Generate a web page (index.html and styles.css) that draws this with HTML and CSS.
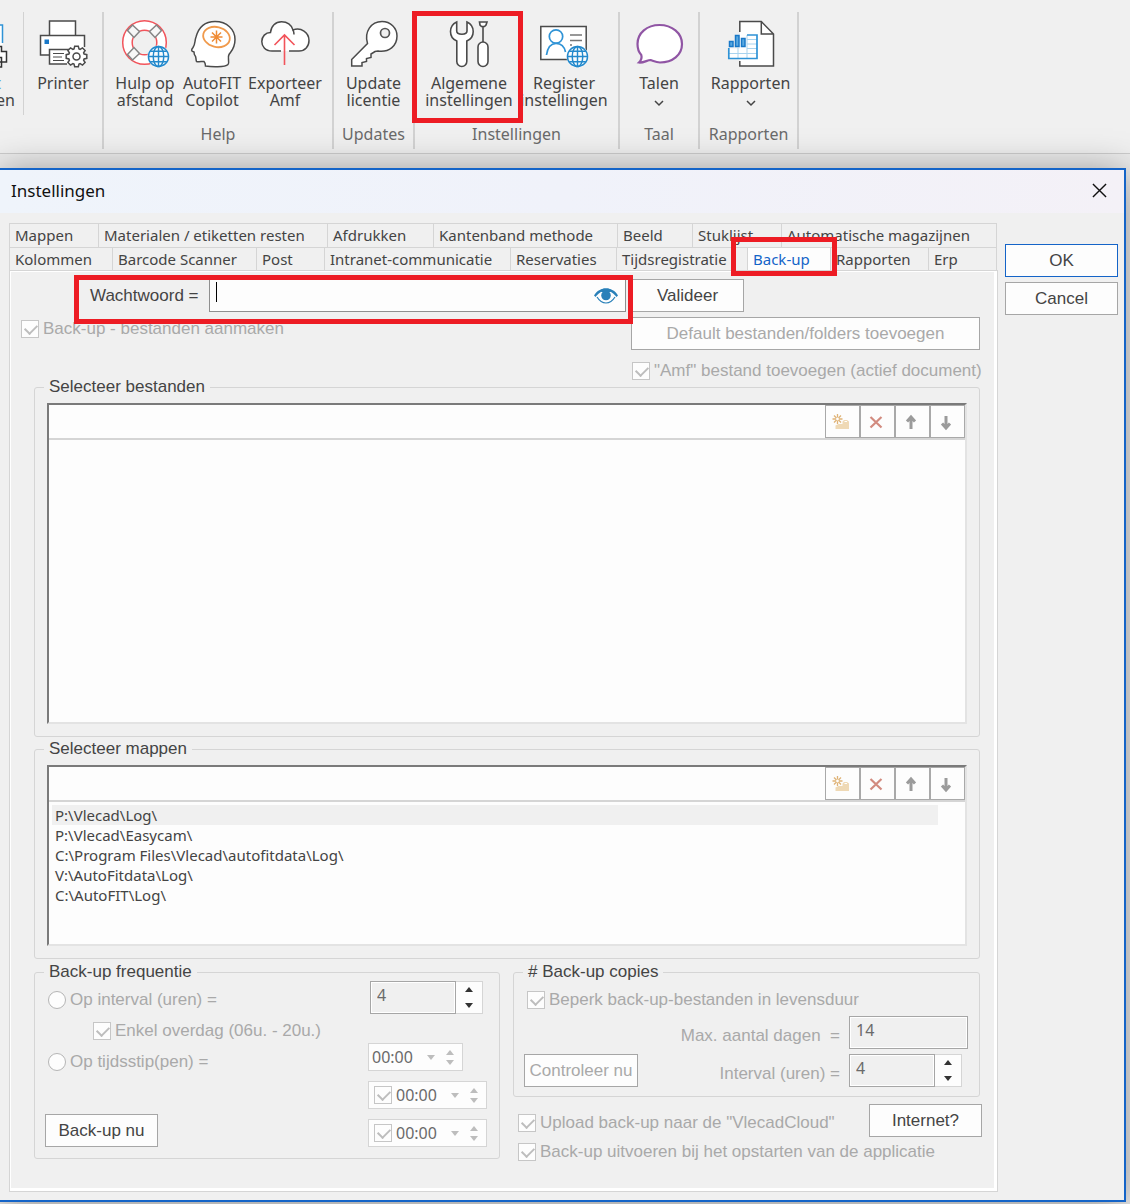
FILE: index.html
```html
<!DOCTYPE html>
<html lang="nl">
<head>
  <meta charset="UTF-8" />
  <meta name="viewport" content="width=device-width, initial-scale=1.0" />
  <title>Instellingen</title>
  <link rel="stylesheet" href="styles.css">
</head>
<body>

  <!-- shared icon parts -->
  <svg class="defs" aria-hidden="true">
    <symbol id="globe" viewBox="0 0 24 24">
      <circle cx="12" cy="12" r="11.5" fill="#f8fbfd" />
      <g fill="none" stroke="#2389cc" stroke-width="1.5">
        <circle cx="12" cy="12" r="10.5" />
        <ellipse cx="12" cy="12" rx="5.5" ry="10.5" />
        <path d="M12 1.5v21M1.5 12h21M3.5 6.5h17M3.5 17.5h17" />
      </g>
    </symbol>
    <symbol id="new" viewBox="0 0 18 18">
      <path d="M5.500 1v10M.5 6h10M2 2.500l7 7M9 2.500l-7 7" stroke="#dfb377" stroke-width="1.3" />
      <circle cx="5.500" cy="6" r="1.400" fill="#fff" />
      <path d="M3.500 12.500l3-1.500h4V8.500l1.500-1.500h3l2 1.500V16h-13.500z" fill="#efd9b5" />
      <path d="M12.500 8.500h2.500" stroke="#fff" />
    </symbol>
    <symbol id="del" viewBox="0 0 18 18"><path d="M3.500 4l11 10.500M14.500 4L3.500 14.500" stroke="#d28b7f" stroke-width="2.200" /></symbol>
    <symbol id="up" viewBox="0 0 18 18"><path d="M9 16V4M5 8.500l4-4.500 4 4.500" fill="none" stroke="#9b9b9b" stroke-width="3" /></symbol>
    <symbol id="down" viewBox="0 0 18 18"><path d="M9 3v12M5 10.500l4 4.500 4-4.500" fill="none" stroke="#9b9b9b" stroke-width="3" /></symbol>
  </svg>

  <header class="ribbon">
    <section class="group group-print">
      <div class="tools">
        <button class="tool cut">
          <svg viewBox="0 0 48 48">
            <path d="M8 5h18.500v22H8z" fill="#fff" />
            <path d="M8 5h18.500v18" fill="none" stroke="#2f93d6" stroke-width="1.500" />
            <path d="M8 26.500h17.500v5h5V42H8zM8 37.500h17.500v9.500H8z" fill="#fff" stroke="#333" stroke-width="1.500" />
          </svg>
          <span><i>t</i><br>en</span>
        </button>
        <button class="tool printer">
          <svg viewBox="0 0 48 48">
            <g fill="#fff" stroke="#4a4a4a" stroke-width="1.500">
              <path d="M10.500 15.500V1h26v14.500" />
              <path d="M28 35H1.500V15.500h44V27" />
              <path d="M28 44H10.500V29.500H30" />
              <path d="M14 33.500h11M14 37h9M14 40.500h11" stroke-width="1" />
              <path transform="translate(37.500 36.500)" d="M7.600-2.500l2.700.7v3.600l-2.700.7-.5 1.100L8.600 6 6 8.600 3.600 7.100l-1.100.5-.7 2.700h-3.600l-.7-2.700-1.100-.5L-6 8.600-8.600 6l1.500-2.400-.5-1.100-2.700-.7v-3.600l2.700-.7.5-1.100L-8.600-6-6-8.600l2.400 1.500 1.100-.5.7-2.700h3.600l.7 2.700 1.100.5L6-8.600 8.600-6 7.100-3.600z" />
              <circle cx="37.500" cy="36.500" r="3.500" />
            </g>
            <path d="M5.500 19.500h4.500V24H5.500z" fill="#1878c8" />
          </svg>
          <span>Printer</span>
        </button>
      </div>
    </section>

    <section class="group group-help">
      <div class="tools">
        <button class="tool w67">
          <svg viewBox="0 0 48 48">
            <circle cx="23.500" cy="22.500" r="17" fill="none" stroke="#fff" stroke-width="9" />
            <g fill="none" stroke="#f2545b" stroke-width="1.500"><circle cx="23.500" cy="22.500" r="21.800" /><circle cx="23.500" cy="22.500" r="12.300" /></g>
            <g fill="#f7f7f7" stroke="#858585" stroke-width="1.500">
              <path d="M6.500 10.500l5-5.500 7 6.500-5.500 6z" />
              <path d="M28.500 11.500l7-6.500 5 5.500-6.500 7z" />
              <path d="M6.500 34.500l6.500-7 5.500 6-7 6.500z" />
            </g>
            <use href="#globe" x="26" y="25" width="23" height="23" />
          </svg>
          <span>Hulp op<br>afstand</span>
        </button>
        <button class="tool w67">
          <svg viewBox="0 0 48 48">
            <path d="M8.500 41.500C7.500 39 8.500 37 7 35.500 5.500 34 6.500 33 6 32 2.500 31 3.500 29.500 5 27.500 7.500 24 6.500 21 8 17 11 6 18 1.500 27 1.500c12 0 20 8 20 18 0 9-4 12-6 15-2 3 1 8-1 10-3 3-17 2.500-22.500 1.500 0-2-.5-3.500-1.500-4.500-3 0-5 .5-7.500 0z" fill="#fff" stroke="#4a4a4a" stroke-width="1.500" />
            <ellipse cx="28.500" cy="17" rx="13.500" ry="10" transform="rotate(14 28.500 17)" fill="none" stroke="#f09a4c" stroke-width="1.800" />
            <path d="M28.500 10.500v13M22.500 17h12M24 12.500l9 9M33 12.500l-9 9" stroke="#ef8b35" stroke-width="1.500" />
          </svg>
          <span>AutoFIT<br>Copilot</span>
        </button>
        <button class="tool w79">
          <svg viewBox="0 0 48 48">
            <path d="M20 31H11C4 31 .8 26 .8 21.500c0-5 3.700-9 8.700-9C10 6 14.500 1.800 20.500 1.800c6 0 10 3.500 11.500 8.200 8-3 16 2.500 16 10.500 0 6-4 10.500-10 10.500h-10" fill="#fff" stroke="#4a4a4a" stroke-width="1.500" />
            <path d="M32 10c.8 1.500 1 3 1 4.500" fill="none" stroke="#4a4a4a" stroke-width="1.500" />
            <path d="M23.500 45V15.500M13.500 25l10-10 10 10" fill="none" stroke="#f2545b" stroke-width="1.600" />
          </svg>
          <span>Exporteer<br>Amf</span>
        </button>
      </div>
      <h2>Help</h2>
    </section>

    <section class="group group-updates">
      <div class="tools">
        <button class="tool w79">
          <svg viewBox="0 0 48 48">
            <path d="M1.700 39.500L17.500 23.500C14 12 21 1.500 32 1.500c8.500 0 15 6.500 15 14.500 0 10-8 16.500-19 15l-3 .5-4 2.500v3.500l-4.500 1v3l-4.500 1v3.500H1.700z" fill="#fff" stroke="#4a4a4a" stroke-width="1.500" />
            <circle cx="35" cy="13" r="4.500" fill="#f0f0f0" stroke="#555" stroke-width="1.700" />
          </svg>
          <span>Update<br>licentie</span>
        </button>
      </div>
      <h2>Updates</h2>
    </section>

    <section class="group group-settings">
      <div class="tools">
        <button class="tool w95">
          <svg viewBox="0 0 48 48">
            <g fill="#fff" stroke="#4a4a4a" stroke-width="1.600">
              <path d="M11.700 2C7.500 4 5.500 7.500 5.500 11.500c0 4.500 2.500 8 6.300 9.500v20.500a5 5 0 0 0 10 0V21c3.800-1.500 6.400-5 6.400-9.500 0-4-2-7.500-6.200-9.500v9c0 2-2 3.200-5.100 3.200S11.700 13 11.700 11z" />
              <path d="M34.500 2h7.500l-1 3-1.500 1.500h-3L35 5z" />
              <path d="M38 6.500V22" />
              <rect x="33" y="22" width="10" height="24.500" rx="5" />
            </g>
          </svg>
          <span>Algemene<br>instellingen</span>
          <b class="marker marker-tool"></b>
        </button>
        <button class="tool w95">
          <svg viewBox="0 0 48 48">
            <path d="M.8 6.500h45.400v33H.8z" fill="#fff" stroke="#4a4a4a" stroke-width="1.500" />
            <path d="M30 15h12M30 20.500h12M30 25h2" stroke="#777" stroke-width="1.500" />
            <g fill="none" stroke="#2f93d6" stroke-width="1.700"><circle cx="16" cy="16.500" r="6.700" /><path d="M6.500 35c1-7 4.500-11.500 9.500-11.500s8.500 3.500 9.500 8.500" /></g>
            <use href="#globe" x="26" y="25" width="23" height="23" />
          </svg>
          <span>Register<br>instellingen</span>
        </button>
      </div>
      <h2>Instellingen</h2>
    </section>

    <section class="group group-lang">
      <div class="tools">
        <button class="tool w79">
          <svg viewBox="0 0 48 48"><path d="M4 42.500c2.500-2.500 3-5 2.300-7.500C3.500 32 2.500 28 2.500 24 2.500 13 12 5 24.500 5S47 13 47 24 37.500 42.500 25 42.500c-3.500 0-6.500-1.500-9.500-2.500-3 0-7 3-11.500 2.500z" fill="#fff" stroke="#9055a4" stroke-width="2.200" /></svg>
          <span>Talen</span>
          <svg class="chev" viewBox="0 0 10 6"><path d="M1 1l4 4 4-4" fill="none" stroke="#444" stroke-width="1.500" /></svg>
        </button>
      </div>
      <h2>Taal</h2>
    </section>

    <section class="group group-reports">
      <div class="tools">
        <button class="tool w95">
          <svg viewBox="0 0 48 48">
            <path d="M12.800 1.500h21.500L46.500 14v32H12.800z" fill="#fff" />
            <path d="M12.800 12V1.500h21.500L46.500 14v32H12.800v-5M34.300 1.500V14h12.200" fill="none" stroke="#4a4a4a" stroke-width="1.500" />
            <path d="M1.800 28.500h16.700V15h11.500v23.500H1.800z" fill="#fff" />
            <path d="M2 33.500h28M20 19.500h10M20 24h10M20 28.500h10M11 28v10M20 15v23" stroke="#a9d3ee" />
            <path d="M1.800 28v10.500H30V15H20" fill="none" stroke="#2f93d6" stroke-width="1.700" />
            <path d="M2.500 21.500H6v5H2.500zM8.500 15.500H12v11H8.500zM14.500 18.500H18v8h-3.500z" fill="#5aa9e0" stroke="#1878c8" stroke-width="1.500" />
          </svg>
          <span>Rapporten</span>
          <svg class="chev" viewBox="0 0 10 6"><path d="M1 1l4 4 4-4" fill="none" stroke="#444" stroke-width="1.500" /></svg>
        </button>
      </div>
      <h2>Rapporten</h2>
    </section>
  </header>

  <main class="dialog">
    <div class="titlebar">
      <h1>Instellingen</h1>
      <button class="close" aria-label="Sluiten"><svg viewBox="0 0 16 16"><path d="M1 1l14 14M15 1L1 15" stroke="#111" stroke-width="1.500" /></svg></button>
    </div>

    <div class="content">
      <div class="pages">
        <nav class="tabs tabs-top">
          <a href="#">Mappen</a>
          <a href="#">Materialen / etiketten resten</a>
          <a href="#">Afdrukken</a>
          <a href="#">Kantenband methode</a>
          <a href="#">Beeld</a>
          <a href="#">Stuklijst</a>
          <a href="#">Automatische magazijnen</a>
        </nav>
        <nav class="tabs tabs-bottom">
          <a href="#">Kolommen</a>
          <a href="#">Barcode Scanner</a>
          <a href="#">Post</a>
          <a href="#">Intranet-communicatie</a>
          <a href="#">Reservaties</a>
          <a href="#">Tijdsregistratie</a>
          <a href="#" class="active">Back-up<b class="marker marker-tab"></b></a>
          <a href="#">Rapporten</a>
          <a href="#">Erp</a>
        </nav>

        <form class="panel">
          <div class="top">
            <div class="top-left">
              <div class="password">
                <label for="password">Wachtwoord =</label>
                <div class="password-box">
                  <input type="password" id="password">
                  <span class="caret"></span>
                  <button type="button" class="eye" aria-label="Toon wachtwoord">
                    <svg viewBox="0 0 24 16">
                      <path d="M0 7.500C3 2.500 7 .5 12 .5s9 2 12 7l-1.500 1.500C20.500 6.500 18.500 4.500 16 3.500H8C5.500 4.500 3.500 6.500 1.500 9z" fill="#2980b9" />
                      <path d="M3 9c2.500 4 5.500 6 9 6s6.500-2 9-6" fill="none" stroke="#2980b9" stroke-width="1.200" />
                      <circle cx="12" cy="7.500" r="6" fill="#fff" />
                      <path d="M5 3.500C7 1 9 .5 12 .5s5 .5 7 3l-3 .5H8z" fill="#2980b9" />
                      <circle cx="12" cy="7.500" r="4.800" fill="#2980b9" />
                    </svg>
                  </button>
                </div>
                <b class="marker marker-password"></b>
              </div>
              <label class="check"><input type="checkbox" checked disabled>Back-up - bestanden aanmaken</label>
            </div>
            <div class="top-right">
              <button type="button" class="btn">Valideer</button>
              <button type="button" class="btn wide" disabled>Default bestanden/folders toevoegen</button>
              <label class="check"><input type="checkbox" checked disabled>"Amf" bestand toevoegen (actief document)</label>
            </div>
          </div>

          <fieldset>
            <legend>Selecteer bestanden</legend>
            <div class="list list-files">
              <div class="list-bar">
                <button type="button" disabled aria-label="Nieuw"><svg><use href="#new" /></svg></button>
                <button type="button" disabled aria-label="Verwijderen"><svg><use href="#del" /></svg></button>
                <button type="button" disabled aria-label="Omhoog"><svg><use href="#up" /></svg></button>
                <button type="button" disabled aria-label="Omlaag"><svg><use href="#down" /></svg></button>
              </div>
            </div>
          </fieldset>

          <fieldset>
            <legend>Selecteer mappen</legend>
            <div class="list list-folders">
              <div class="list-bar">
                <button type="button" disabled aria-label="Nieuw"><svg><use href="#new" /></svg></button>
                <button type="button" disabled aria-label="Verwijderen"><svg><use href="#del" /></svg></button>
                <button type="button" disabled aria-label="Omhoog"><svg><use href="#up" /></svg></button>
                <button type="button" disabled aria-label="Omlaag"><svg><use href="#down" /></svg></button>
              </div>
              <ul>
                <li class="selected">P:\Vlecad\Log\</li>
                <li>P:\Vlecad\Easycam\</li>
                <li>C:\Program Files\Vlecad\autofitdata\Log\</li>
                <li>V:\AutoFitdata\Log\</li>
                <li>C:\AutoFIT\Log\</li>
              </ul>
            </div>
          </fieldset>

          <div class="bottom">
            <fieldset class="frequency">
              <legend>Back-up frequentie</legend>
              <div class="frequency-grid">
                <div class="options">
                  <label class="check"><input type="radio" name="mode" disabled>Op interval (uren) =</label>
                  <label class="check indent"><input type="checkbox" checked disabled>Enkel overdag (06u. - 20u.)</label>
                  <label class="check"><input type="radio" name="mode" disabled>Op tijdsstip(pen) =</label>
                  <button type="button" class="btn">Back-up nu</button>
                </div>
                <div class="times">
                  <div class="spinner">
                    <input type="text" value="4" aria-label="Interval" disabled>
                    <span class="steps"><button type="button" class="inc" aria-label="Meer"></button><button type="button" class="dec" aria-label="Minder"></button></span>
                  </div>
                  <div class="time">
                    <input type="text" value="00:00" aria-label="Tijdstip 1" disabled>
                    <button type="button" class="dec" disabled aria-label="Kies"></button>
                    <span class="steps"><button type="button" class="inc" disabled aria-label="Meer"></button><button type="button" class="dec" disabled aria-label="Minder"></button></span>
                  </div>
                  <div class="time time-check">
                    <input type="checkbox" checked disabled aria-label="Tijdstip 2 actief">
                    <input type="text" value="00:00" aria-label="Tijdstip 2" disabled>
                    <button type="button" class="dec" disabled aria-label="Kies"></button>
                    <span class="steps"><button type="button" class="inc" disabled aria-label="Meer"></button><button type="button" class="dec" disabled aria-label="Minder"></button></span>
                  </div>
                  <div class="time time-check">
                    <input type="checkbox" checked disabled aria-label="Tijdstip 3 actief">
                    <input type="text" value="00:00" aria-label="Tijdstip 3" disabled>
                    <button type="button" class="dec" disabled aria-label="Kies"></button>
                    <span class="steps"><button type="button" class="inc" disabled aria-label="Meer"></button><button type="button" class="dec" disabled aria-label="Minder"></button></span>
                  </div>
                </div>
              </div>
            </fieldset>

            <div class="right">
              <fieldset class="copies">
                <legend># Back-up copies</legend>
                <label class="check"><input type="checkbox" checked disabled>Beperk back-up-bestanden in levensduur</label>
                <div class="copies-grid">
                  <span></span>
                  <label for="days">Max. aantal dagen&nbsp; =</label>
                  <input type="text" id="days" class="field" value="14" disabled>
                  <button type="button" class="btn" disabled>Controleer nu</button>
                  <label for="hours">Interval (uren) =</label>
                  <div class="spinner">
                    <input type="text" id="hours" value="4" disabled>
                    <span class="steps"><button type="button" class="inc" aria-label="Meer"></button><button type="button" class="dec" aria-label="Minder"></button></span>
                  </div>
                </div>
              </fieldset>
              <div class="cloud">
                <div class="cloud-checks">
                  <label class="check"><input type="checkbox" checked disabled>Upload back-up naar de "VlecadCloud"</label>
                  <label class="check"><input type="checkbox" checked disabled>Back-up uitvoeren bij het opstarten van de applicatie</label>
                </div>
                <button type="button" class="btn">Internet?</button>
              </div>
            </div>
          </div>
        </form>
      </div>

      <div class="actions">
        <button type="button" class="btn primary">OK</button>
        <button type="button" class="btn">Cancel</button>
      </div>
    </div>
  </main>

</body>
</html>
```
FILE: styles.css
```css
* { box-sizing: border-box; }
body {
  margin: 0;
  background-color: #ececec;
  color: #444;
  font-family: "Liberation Sans", Arial, sans-serif;
  font-size: 17px;
  overflow-x: hidden;
}
h1, h2 { margin: 0; font-weight: normal; }
button, input { font: inherit; color: inherit; }
button { padding: 0; border: none; background: none; }
.defs { position: absolute; width: 0; height: 0; }

/* ribbon */
.ribbon {
  display: flex;
  height: 154px;
  padding: 12px 0 4px;
  background-color: #f0f0f0;
  border-bottom: 1px solid #ccc;
  font-family: "Noto Sans", "Open Sans", sans-serif;
  font-size: 16px;
}
.group {
  display: flex;
  flex-direction: column;
  align-items: center;
  border-right: 2px solid #d2d2d2;
}
.group h2 {
  margin-top: auto;
  padding-bottom: 4px;
  font-size: 16px;
  line-height: 22px;
  color: #6a6a6a;
}
.group-print { width: 104px; align-items: stretch; }
.group-help { width: 230px; }
.group-updates { width: 81px; }
.group-settings { width: 205px; }
.group-lang { width: 80px; }
.group-reports { width: 99px; }
.group-reports .tool { padding-left: 4px; }
.tools { display: flex; height: 103px; }
.tool {
  display: flex;
  flex-direction: column;
  align-items: center;
  position: relative;
  padding-top: 8px;
  line-height: 17px;
  white-space: nowrap;
}
.tool svg { width: 48px; height: 48px; margin-bottom: 7px; overflow: visible; }
.tool .chev { width: 10px; height: 6px; margin: 8px 0 0; }
.w67 { width: 67px; }
.w79 { width: 79px; }
.w95 { width: 95px; }
.cut {
  width: 24px;
  align-items: flex-end;
  padding-right: 8px;
  border-right: 1px solid #d2d2d2;
  text-align: right;
}
.cut svg { margin-right: -9px; }
.cut i { font-style: normal; color: #5aa9e0; padding-right: 14px; }
.printer { flex: 1; }

/* red highlight frames */
.marker {
  position: absolute;
  z-index: 2;
  border: 5px solid #ed1c24;
  pointer-events: none;
}
.marker-tool { inset: -1px -6px -8px -10px; }
.marker-tab { inset: -11px -7px -6px -17px; }
.marker-password { inset: -4px -7px -12px 53px; }

/* dialog */
.dialog {
  position: relative;
  margin: 14px 4px 2px 0;
  border: 2px solid #1464c8;
  border-left: none;
  background-color: #f0f0f0;
  box-shadow: 0 4px 36px rgba(0, 0, 0, 0.4);
}
.titlebar {
  display: flex;
  justify-content: space-between;
  align-items: center;
  height: 43px;
  padding: 0 17px 2px 11px;
  background: linear-gradient(90deg, #eff4fb, #f0f2fa 50%, #f4f1f7);
}
.titlebar h1 {
  font-family: "Noto Sans", "Open Sans", sans-serif;
  font-size: 17px;
  color: #111;
}
.close, .close svg { width: 15px; height: 15px; }
.close svg { display: block; }
.content {
  display: grid;
  grid-template-columns: minmax(0, 1fr) 113px;
  gap: 7px;
  padding: 10px 6px 8px 9px;
}
.actions {
  display: flex;
  flex-direction: column;
  gap: 5px;
  padding-top: 21px;
}
.btn {
  width: 113px;
  height: 33px;
  border: 1px solid #a6a6a6;
  background-color: #fdfdfd;
  white-space: nowrap;
}
.btn.primary { border-color: #1464c8; }
.btn:disabled { color: #a9a9a9; }

/* tabs */
.tabs {
  display: grid;
  margin-right: 1px;
  border-top: 1px solid #d5d5d5;
  border-right: 1px solid #d5d5d5;
  font-family: "Noto Sans", "Open Sans", sans-serif;
  font-size: 15px;
}
.tabs a {
  position: relative;
  padding-left: 5px;
  border-left: 1px solid #d5d5d5;
  line-height: 23px;
  color: #444;
  text-decoration: none;
  white-space: nowrap;
}
.tabs-top { grid-template-columns: 89fr 229fr 106fr 184fr 75fr 89fr 215fr; }
.tabs-bottom { grid-template-columns: 103fr 144fr 68fr 186fr 106fr 131fr 83fr 98fr 68fr; }
.tabs-bottom a { line-height: 22px; }
.tabs .active { background-color: #fdfdfd; color: #1464c8; }

/* back-up page */
.panel {
  padding: 8px 17px 30px 11px;
  border: 1px solid #d5d5d5;
  box-shadow: inset 1px 1px #fff, inset -3px -3px #fff;
}
.top {
  display: grid;
  grid-template-columns: minmax(0, 1fr) 349px;
  margin-bottom: -2px;
}
.top-left { display: flex; flex-direction: column; gap: 8px; }
.password {
  display: flex;
  position: relative;
  align-items: center;
  gap: 10px;
  margin-right: 5px;
  padding-left: 69px;
}
.password-box {
  display: flex;
  position: relative;
  flex: 1;
  align-items: center;
  height: 33px;
  padding-right: 7px;
  border: 1px solid #8f8f8f;
  background-color: #fdfdfd;
}
.password-box input {
  flex: 1;
  min-width: 0;
  border: none;
  outline: none;
  background: none;
}
.caret {
  position: absolute;
  left: 6px;
  top: 2px;
  width: 1px;
  height: 20px;
  background-color: #000;
}
.eye svg { display: block; width: 24px; height: 16px; }
.top-right {
  display: flex;
  flex-direction: column;
  align-items: flex-start;
  gap: 5px;
}
.top-right .wide { width: 100%; }
.top-right .check { margin-top: 7px; margin-left: 1px; }

.check {
  display: flex;
  align-items: center;
  gap: 4px;
  height: 18px;
  color: #a9a9a9;
  white-space: nowrap;
}
input[type="checkbox"],
input[type="radio"] {
  appearance: none;
  flex: none;
  position: relative;
  width: 18px;
  height: 18px;
  margin: 0;
  border: 1px solid #c6c6c6;
  background-color: #fdfdfd;
}
input[type="radio"] { border-radius: 50%; border-color: #b5b5b5; }
input[type="checkbox"]:checked::after {
  content: "";
  position: absolute;
  left: 3px;
  top: 3px;
  width: 10px;
  height: 6px;
  border: solid #bdbdbd;
  border-width: 0 0 2px 2px;
  transform: rotate(-45deg);
}

fieldset {
  min-width: 0;
  margin: 0 0 3px 13px;
  padding: 7px 12px 12px;
  border: 1px solid #d5d5d5;
  border-radius: 3px;
}
legend { margin-left: -3px; padding: 0 5px; line-height: 18px; }

.list {
  border: 2px solid;
  border-color: #7a7a7a #e3e3e3 #e3e3e3 #7a7a7a;
  background-color: #fdfdfd;
}
.list-files { min-height: 321px; }
.list-folders { min-height: 181px; }
.list-bar {
  display: flex;
  justify-content: flex-end;
  height: 35px;
  border-bottom: 2px solid #d5d5d5;
}
.list-bar button {
  display: flex;
  align-items: center;
  justify-content: center;
  width: 35px;
  padding-right: 3px;
  border: 1px solid #a9a9a9;
}
.list-bar svg { width: 18px; height: 18px; }
.list ul {
  margin: 0;
  padding: 3px 27px 3px 3px;
  list-style: none;
  font-family: "Noto Sans", "Open Sans", sans-serif;
  font-size: 15px;
}
.list li { padding-left: 3px; line-height: 20px; }
.list .selected { background-color: #f0f0f0; }

.bottom {
  display: grid;
  grid-template-columns: 479fr 480fr;
  align-items: start;
  padding-top: 1px;
}
.bottom fieldset { margin-bottom: 0; padding-top: 0; }
.frequency { padding-bottom: 11px; }
.frequency-grid { display: flex; justify-content: space-between; }
.options { display: flex; flex-direction: column; gap: 13px; padding-top: 10px; }
.options .check { margin-left: 1px; }
.options .indent { margin-left: 46px; }
.options .btn { margin-top: auto; margin-left: -2px; }
.times {
  display: flex;
  flex-direction: column;
  align-items: flex-start;
  gap: 10px;
  width: 119px;
}
.times .spinner { margin: 0 0 19px 2px; }
.spinner { display: flex; width: 113px; height: 33px; }
.spinner input, .field {
  min-width: 0;
  padding: 0 6px 6px;
  border: 1px solid #a6a6a6;
  box-shadow: inset 0 0 0 1px #fff;
  background-color: #f0f0f0;
  color: #6a6a6a;
  font-family: "Noto Sans", "Open Sans", sans-serif;
  font-size: 16px;
}
.spinner input { flex: 1; }
.steps {
  display: flex;
  flex-direction: column;
  justify-content: space-around;
  align-items: center;
}
.spinner .steps {
  width: 27px;
  border: 1px solid #d5d5d5;
  border-left: none;
  background-color: #fdfdfd;
}
.inc, .dec {
  width: 0;
  height: 0;
  border: 4px solid transparent;
}
.inc { border-top: none; border-bottom: 5px solid #333; }
.dec { border-bottom: none; border-top: 5px solid #333; }
.inc:disabled { border-bottom-color: #bdbdbd; }
.dec:disabled { border-top-color: #bdbdbd; }
.time {
  display: flex;
  align-items: center;
  width: 95px;
  height: 28px;
  padding: 0 8px 0 3px;
  border: 1px solid #d5d5d5;
  background-color: #fdfdfd;
}
.time input[type="text"] {
  width: 44px;
  padding: 0;
  border: none;
  background: none;
  color: #6a6a6a;
  font-family: "Noto Sans", "Open Sans", sans-serif;
  font-size: 16px;
}
.time .dec { margin: 0 auto; }
.time .steps { height: 20px; }
.time-check { width: 119px; gap: 4px; padding-left: 5px; }

.copies { padding-right: 11px; padding-bottom: 9px; }
.copies > .check { margin: 10px 0 7px 1px; }
.copies-grid {
  display: grid;
  grid-template-columns: 114px 1fr 119px;
  gap: 5px 9px;
  align-items: center;
  margin-left: -2px;
  color: #a9a9a9;
}
.copies-grid label { padding-top: 6px; text-align: right; }
.copies-grid .btn { width: 100%; }
.field { width: 100%; height: 33px; }
.cloud {
  display: flex;
  justify-content: space-between;
  margin: 7px -2px 0 18px;
}
.cloud-checks {
  display: flex;
  flex-direction: column;
  gap: 11px;
  width: 0;
  padding-top: 10px;
}
```
